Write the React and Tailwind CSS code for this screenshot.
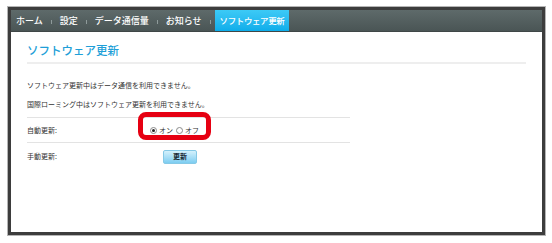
import React from "react";

const navItems = ["ホーム", "設定", "データ通信量", "お知らせ"];

const Sep = () => <span className="w-px h-[4px] bg-[#8e9a9a] mt-[2px]" />;

const Radio = ({ checked }) => (
  <span className="w-[7px] h-[7px] rounded-full border border-[#8a8a8a] bg-white flex items-center justify-center">
    {checked ? <span className="w-[3px] h-[3px] rounded-full bg-[#222]" /> : null}
  </span>
);

export default function App() {
  return (
    <div
      className="w-[552px] h-[243px] bg-white pl-[8px] pt-[7px]"
      style={{ fontFamily: '"Noto Sans CJK JP", "Noto Sans", sans-serif' }}
    >
      <div className="w-[537px] h-[228px] border-[3px] border-[#3d3d3d] outline outline-1 outline-[#b5b5b5] bg-white flex flex-col">
        {/* top navigation */}
        <div className="h-[22px] flex items-center bg-gradient-to-b from-[#5e6a6a] to-[#4a5555] border-b border-[#3f4747] text-white text-[9px] font-medium">
          {navItems.map((item, i) => (
            <React.Fragment key={item}>
              <span className={i === 0 ? "pl-[5px] pr-[8px]" : "px-[8px]"}>{item}</span>
              <Sep />
            </React.Fragment>
          ))}
          <span className="ml-[4px] h-full px-[5px] flex items-center bg-gradient-to-b from-[#3ccaf6] to-[#0badea] text-[8.5px] tracking-[-0.4px]">
            ソフトウェア更新
          </span>
          <span className="ml-[3px]">
            <Sep />
          </span>
        </div>

        {/* content */}
        <div className="px-[16px] text-[#333] text-[7px]">
          <div className="pt-[10px] pb-[4px] border-b-2 border-[#eeeeee]">
            <h1 className="text-[11.5px] leading-[16px] text-[#1f9fd8] font-medium">ソフトウェア更新</h1>
          </div>

          <p className="mt-[15px] leading-[12px]">ソフトウェア更新中はデータ通信を利用できません。</p>
          <p className="mt-[7px] leading-[12px]">国際ローミング中はソフトウェア更新を利用できません。</p>

          <div className="w-[323px] mt-[7px] border-t border-[#e3e3e3]">
            <div className="h-[25px] flex items-center border-b border-[#e3e3e3]">
              <span className="w-[123px]">自動更新:</span>
              <div className="relative flex items-center">
                <span className="absolute -left-[12px] -top-[13px] w-[73px] h-[28px] border-[5px] border-[#e60012] rounded-[8px]" />
                <Radio checked />
                <span className="ml-[2px]">オン</span>
                <span className="ml-[3px]">
                  <Radio />
                </span>
                <span className="ml-[2px]">オフ</span>
              </div>
            </div>
            <div className="h-[27px] flex items-center">
              <span className="w-[136px]">手動更新:</span>
              <button className="w-[34px] h-[14px] rounded-[2px] border border-[#86c9e6] bg-gradient-to-b from-[#d4f1fc] to-[#7ccdf1] text-[#1a2a33] text-[7px] font-bold leading-none">
                更新
              </button>
            </div>
          </div>
        </div>
      </div>
    </div>
  );
}
